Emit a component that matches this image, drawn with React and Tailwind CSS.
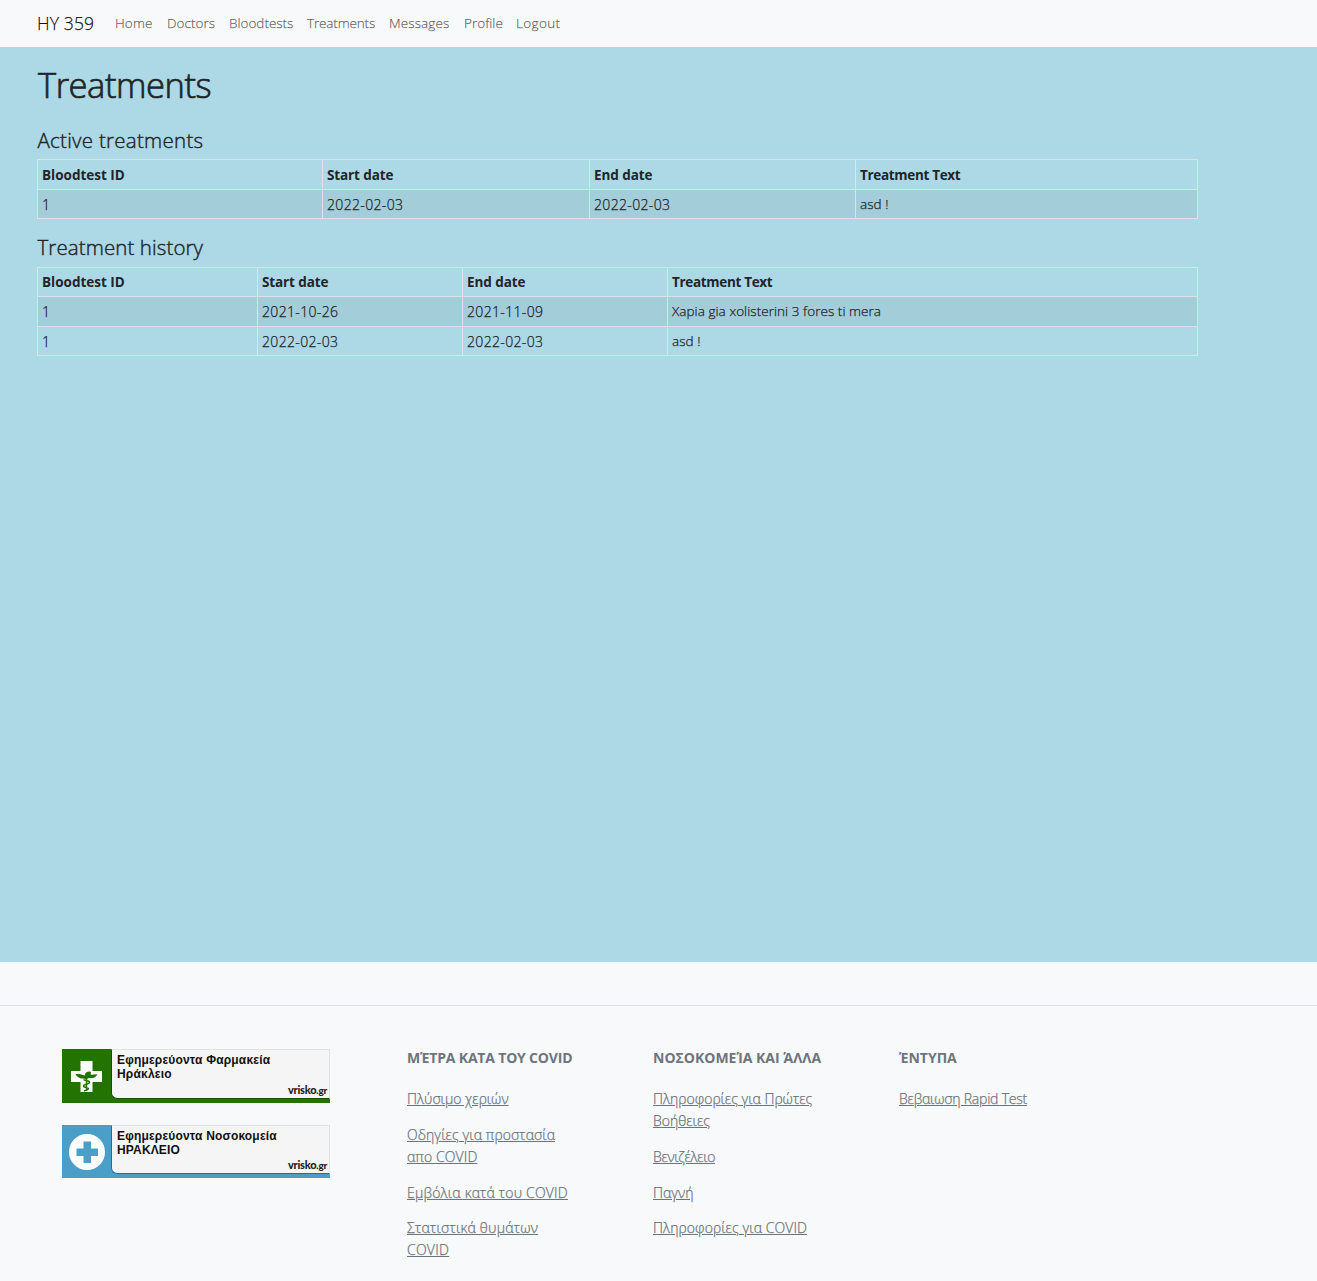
const navLinks = [
  { label: "Home", width: "w-[52px]", text: "tracking-[0.15px]" },
  { label: "Doctors", width: "w-[62px]", text: "tracking-[0.03px]" },
  { label: "Bloodtests", width: "w-[78px]", text: "" },
  { label: "Treatments", width: "w-[82px]", text: "tracking-[-0.15px]" },
  { label: "Messages", width: "w-[75px]", text: "tracking-[0.1px]" },
  { label: "Profile", width: "w-[52px]", text: "tracking-[0.04px]" },
  { label: "Logout", width: "w-[60px]", text: "tracking-[0.35px]" },
];

const headers = [
  { label: "Bloodtest ID", text: "" },
  { label: "Start date", text: "tracking-[-0.12px]" },
  { label: "End date", text: "tracking-[-0.08px]" },
  { label: "Treatment Text", text: "tracking-[-0.32px]" },
];

const activeRows = [["1", "2022-02-03", "2022-02-03", "asd !"]];
const historyRows = [
  ["1", "2021-10-26", "2021-11-09", "Xapia gia xolisterini 3 fores ti mera"],
  ["1", "2022-02-03", "2022-02-03", "asd !"],
];

const cellText = [
  "text-[14px]",
  "text-[14px] tracking-[0.34px]",
  "text-[14px] tracking-[0.34px]",
  "text-[13.5px] tracking-[0.05px]",
];

function TreatmentTable({ rows, columns, rowHeights, headPadding }) {
  return (
    <table className="w-[1160px] table-fixed border-collapse leading-[21px]">
      <colgroup>
        {columns.map((c, i) => (
          <col key={i} className={c} />
        ))}
      </colgroup>
      <thead>
        <tr className={rowHeights[0]}>
          {headers.map((h) => (
            <th key={h.label} className={`border border-[#dee2e6] px-[4px] pb-0 text-left font-bold [-webkit-text-stroke:0px] ${headPadding}`}>
              <span className={h.text}>{h.label}</span>
            </th>
          ))}
        </tr>
      </thead>
      <tbody>
        {rows.map((row, r) => (
          <tr key={r} className={`${rowHeights[r + 1]} ${r % 2 === 0 ? "bg-black/5" : ""}`}>
            {row.map((cell, c) => (
              <td key={c} className={`border border-[#dee2e6] px-[4px] py-0 ${cellText[c]}`}>
                {cell}
              </td>
            ))}
          </tr>
        ))}
      </tbody>
    </table>
  );
}

function Badge({ title, place, panel, inner, height, icon, titleText, placeText }) {
  return (
    <div className={`flex w-[268px] ${height} ${panel}`}>
      <div className="flex w-[49px] shrink-0 items-center justify-center">{icon}</div>
      <div
        className={`relative mb-[4px] flex-1 rounded-bl-[6px] border border-t-[#dfe1e3] border-r-[#dfe1e3] bg-[#f5f5f5] pt-[3px] pl-[5px] font-['Liberation_Sans',sans-serif] text-[12px] leading-[14px] font-bold text-[#111] [-webkit-text-stroke:0px] ${inner}`}
      >
        <div className={`whitespace-nowrap ${titleText}`}>{title}</div>
        <div className={placeText}>{place}</div>
        <div className="absolute right-[2px] bottom-[1px] font-['Lato',sans-serif] text-[11px] leading-[13px] font-black tracking-[-0.25px] whitespace-nowrap text-[#222]">
          vrisko<span className="text-[10px]">.gr</span>
        </div>
      </div>
    </div>
  );
}

function PharmacyIcon() {
  return (
    <svg width="31" height="31" viewBox="0 0 31 31" fill="none">
      <path d="M9.500 0h12v10H31v11h-9.500v10h-12V21H0V10h9.500z" fill="#fff" />
      <path d="M4.500 13.200c2.500-.6 6 0 9.500 1.300C14 11.500 16.500 10 19 10.500c1.500.3 1.200 1.700 0 1.800 1.700.4 1.300 1.200.5 1.600 2.200-.2 4.500-.7 7-.7-1.500 3.500-5 4.300-8.500 3.800-1.500 1-4 1.200-5.500.6-3.500 0-6.500-1.400-8-4.400z" fill="#237300" />
      <path d="M15.500 12v18M12.500 18.500c2 1.500 6.500 1 6 3s-6 1.500-6 3.500 5 .8 5 2.500-3 1.700-4.500 2.500" stroke="#237300" strokeWidth="1.500" />
    </svg>
  );
}

function HospitalIcon() {
  return (
    <svg width="36" height="36" viewBox="0 0 36 36">
      <circle cx="18" cy="18" r="18" fill="#fff" />
      <path d="M14.500 7.500h7.500v7h7v7.500h-7v7h-7.500v-7h-7v-7.500h7z" fill="#4a9fc9" />
    </svg>
  );
}

const footerColumns = [
  {
    title: "ΜΈΤΡΑ ΚΑΤΑ ΤΟΥ COVID",
    text: "tracking-[-0.18px]",
    links: [
      { label: "Πλύσιμο χεριών", text: "" },
      { label: "Οδηγίες για προστασία απο COVID", text: "tracking-[0.09px]" },
      { label: "Εμβόλια κατά του COVID", text: "tracking-[0.2px]" },
      { label: "Στατιστικά θυμάτων COVID", text: "tracking-[0.24px]" },
    ],
  },
  {
    title: "ΝΟΣΟΚΟΜΕΊΑ ΚΑΙ ΆΛΛΑ",
    text: "",
    links: [
      { label: "Πληροφορίες για Πρώτες Βοήθειες", text: "" },
      { label: "Βενιζέλειο", text: "tracking-[-0.34px]" },
      { label: "Παγνή", text: "" },
      { label: "Πληροφορίες για COVID", text: "tracking-[0.08px]" },
    ],
  },
  {
    title: "ΈΝΤΥΠΑ",
    text: "",
    links: [{ label: "Βεβαιωση Rapid Test", text: "tracking-[-0.21px]" }],
  },
];

export default function App() {
  return (
    <div className="flex h-[1281px] flex-col overflow-hidden bg-[#f8f9fa] font-['Open_Sans','Noto_Sans',sans-serif] text-[13.5px] leading-[21.6px] font-light text-[#212529] [-webkit-text-stroke:0.25px]">
      <nav className="flex h-[47px] shrink-0 items-center pl-[37px]">
        <a className="w-[78px] text-[17.5px] tracking-[0.15px] text-black/90">HY 359</a>
        <div className="flex text-black/55">
          {navLinks.map((l) => (
            <a key={l.label} className={`${l.width} ${l.text}`}>{l.label}</a>
          ))}
        </div>
      </nav>
      <main className="h-[915px] shrink-0 bg-[#add8e6] pl-[37px]">
        <h1 className="h-[80px] pt-[16px] pl-[1px] text-[34.5px] leading-[43px] tracking-[-0.45px] [-webkit-text-stroke:0.7px]">Treatments</h1>
        <h2 className="h-[32px] pl-[0.5px] text-[20.5px] leading-[26px] tracking-[0.27px] [-webkit-text-stroke:0.4px]">Active treatments</h2>
        <TreatmentTable rows={activeRows} columns={["w-[285px]", "w-[267px]", "w-[266px]", "w-[342px]"]} rowHeights={["h-[30px]", "h-[29px]"]} headPadding="pt-[2px]" />
        <h2 className="mt-[15px] h-[33px] pl-[0.5px] text-[20.5px] leading-[26px] tracking-[0.1px] [-webkit-text-stroke:0.4px]">Treatment history</h2>
        <TreatmentTable rows={historyRows} columns={["w-[220px]", "w-[205px]", "w-[205px]", "w-[530px]"]} rowHeights={["h-[29px]", "h-[30px]", "h-[29px]"]} headPadding="pt-0" />
      </main>
      <footer className="shrink-0 pt-[43px]">
        <div className="flex border-t border-[#dee2e6] pt-[43px] pl-[62px] text-[#6c757d]">
          <div className="flex w-[345px] flex-col gap-[22px]">
            <Badge title="Εφημερεύοντα Φαρμακεία" place="Ηράκλειο" titleText="tracking-[0.18px]" placeText="tracking-[0.2px]" height="h-[54px]" panel="bg-[#237300]" inner="border-b-[#135000] border-l-[#135000]" icon={<PharmacyIcon />} />
            <Badge title="Εφημερεύοντα Νοσοκομεία" place="ΗΡΑΚΛΕΙΟ" titleText="tracking-[0.18px]" placeText="tracking-[0.15px]" height="h-[53px]" panel="bg-[#4a9fc9]" inner="border-b-[#1f6f9c] border-l-[#1f6f9c]" icon={<HospitalIcon />} />
          </div>
          {footerColumns.map((col) => (
            <div key={col.title} className="w-[246px] text-[14px]">
              <h6 className={`mb-[22.1px] leading-[17.3px] font-bold whitespace-nowrap [-webkit-text-stroke:0px] ${col.text}`}>{col.title}</h6>
              <div className="flex w-[168px] flex-col gap-[14.2px]">
                {col.links.map((l) => (
                  <p key={l.label} className={l.text}>
                    <a className="underline">{l.label}</a>
                  </p>
                ))}
              </div>
            </div>
          ))}
        </div>
      </footer>
    </div>
  );
}
